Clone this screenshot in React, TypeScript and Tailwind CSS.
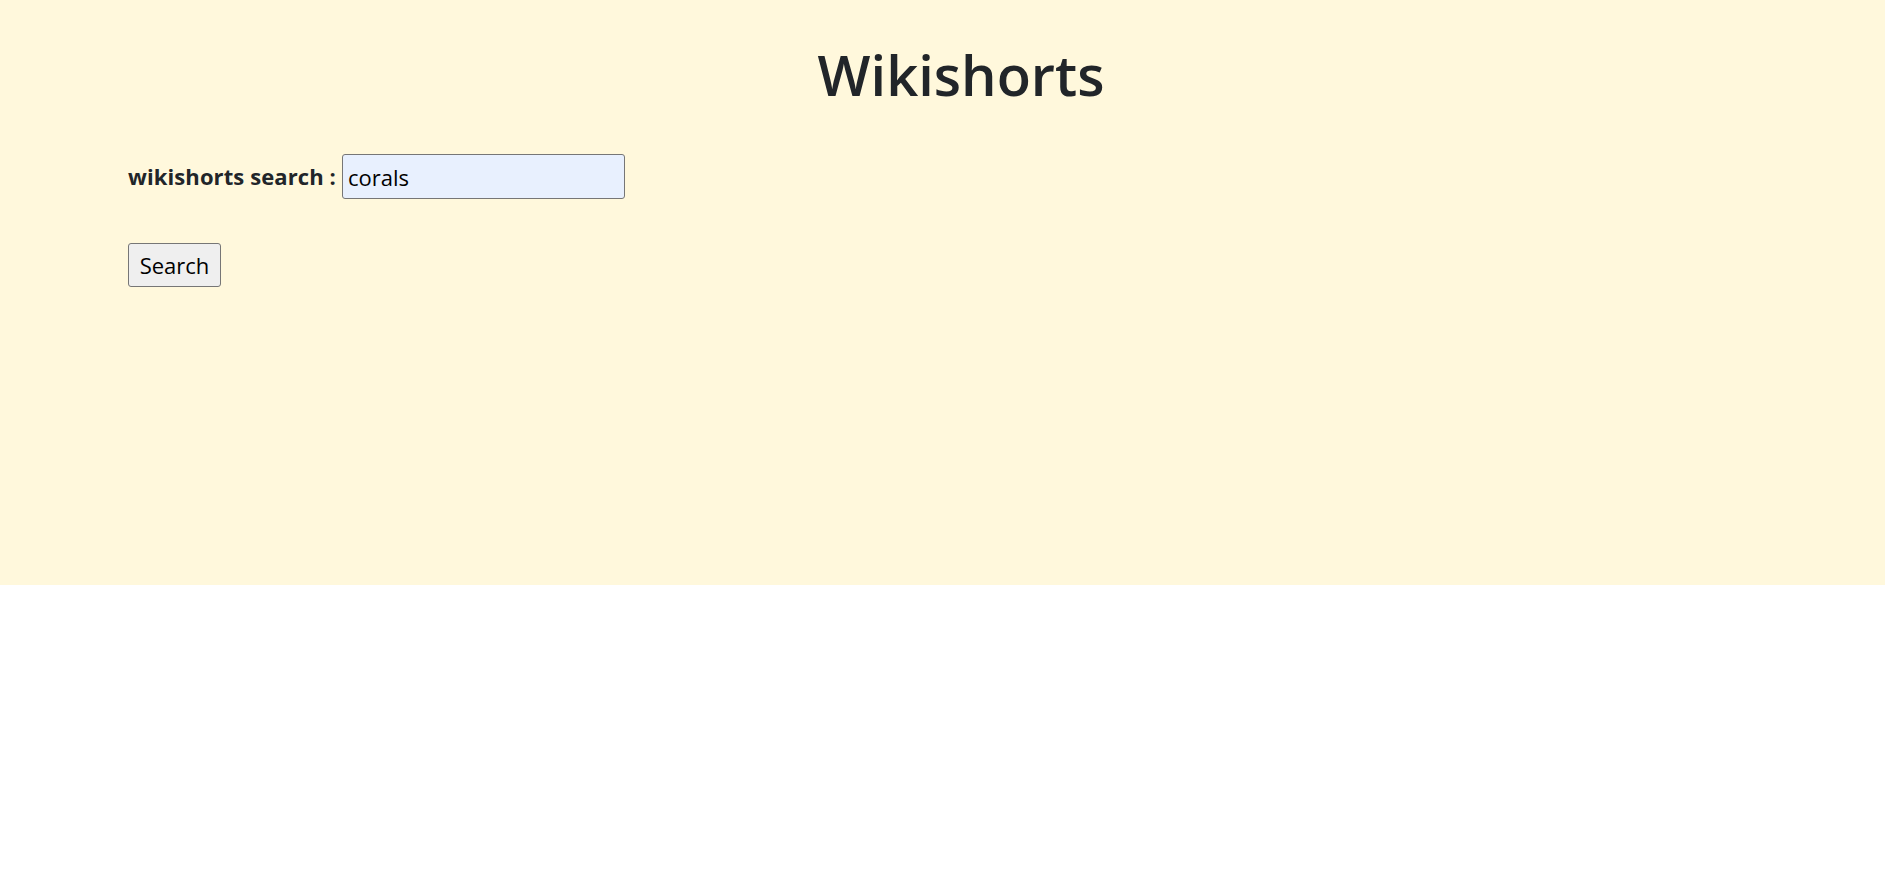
import React, { useState } from 'react';

const App: React.FC = () => {
    const [query, setQuery] = useState('corals');

    return (
        <div className="min-h-screen bg-white" style={{ fontFamily: '"Open Sans", "Noto Sans", sans-serif' }}>
            {/* header area */}
            <div className="h-[585px] bg-[#fff8dc] pl-[128px] pr-[91px] text-[#212529]">
                <h1 className="pt-[30px] text-center text-[56px] font-semibold leading-[88px]">Wikishorts</h1>

                <form onSubmit={(e) => e.preventDefault()}>
                    <div className="flex items-center h-[45px] mt-[36px]">
                        <label className="text-[22px] font-bold mr-[6px] tracking-[0.1px]">wikishorts search :</label>
                        <input
                            value={query}
                            onChange={(e) => setQuery(e.target.value)}
                            className="w-[283px] h-[45px] px-[5px] text-[22px] text-black bg-[#e8f0fe] border border-[#767676] rounded-[3px] outline-none"
                        />
                    </div>

                    <button
                        type="submit"
                        className="mt-[44px] w-[93px] h-[44px] text-[22px] text-black bg-[#efefef] border border-[#767676] rounded-[3px]"
                    >
                        Search
                    </button>
                </form>
            </div>
        </div>
    );
};

export default App;
